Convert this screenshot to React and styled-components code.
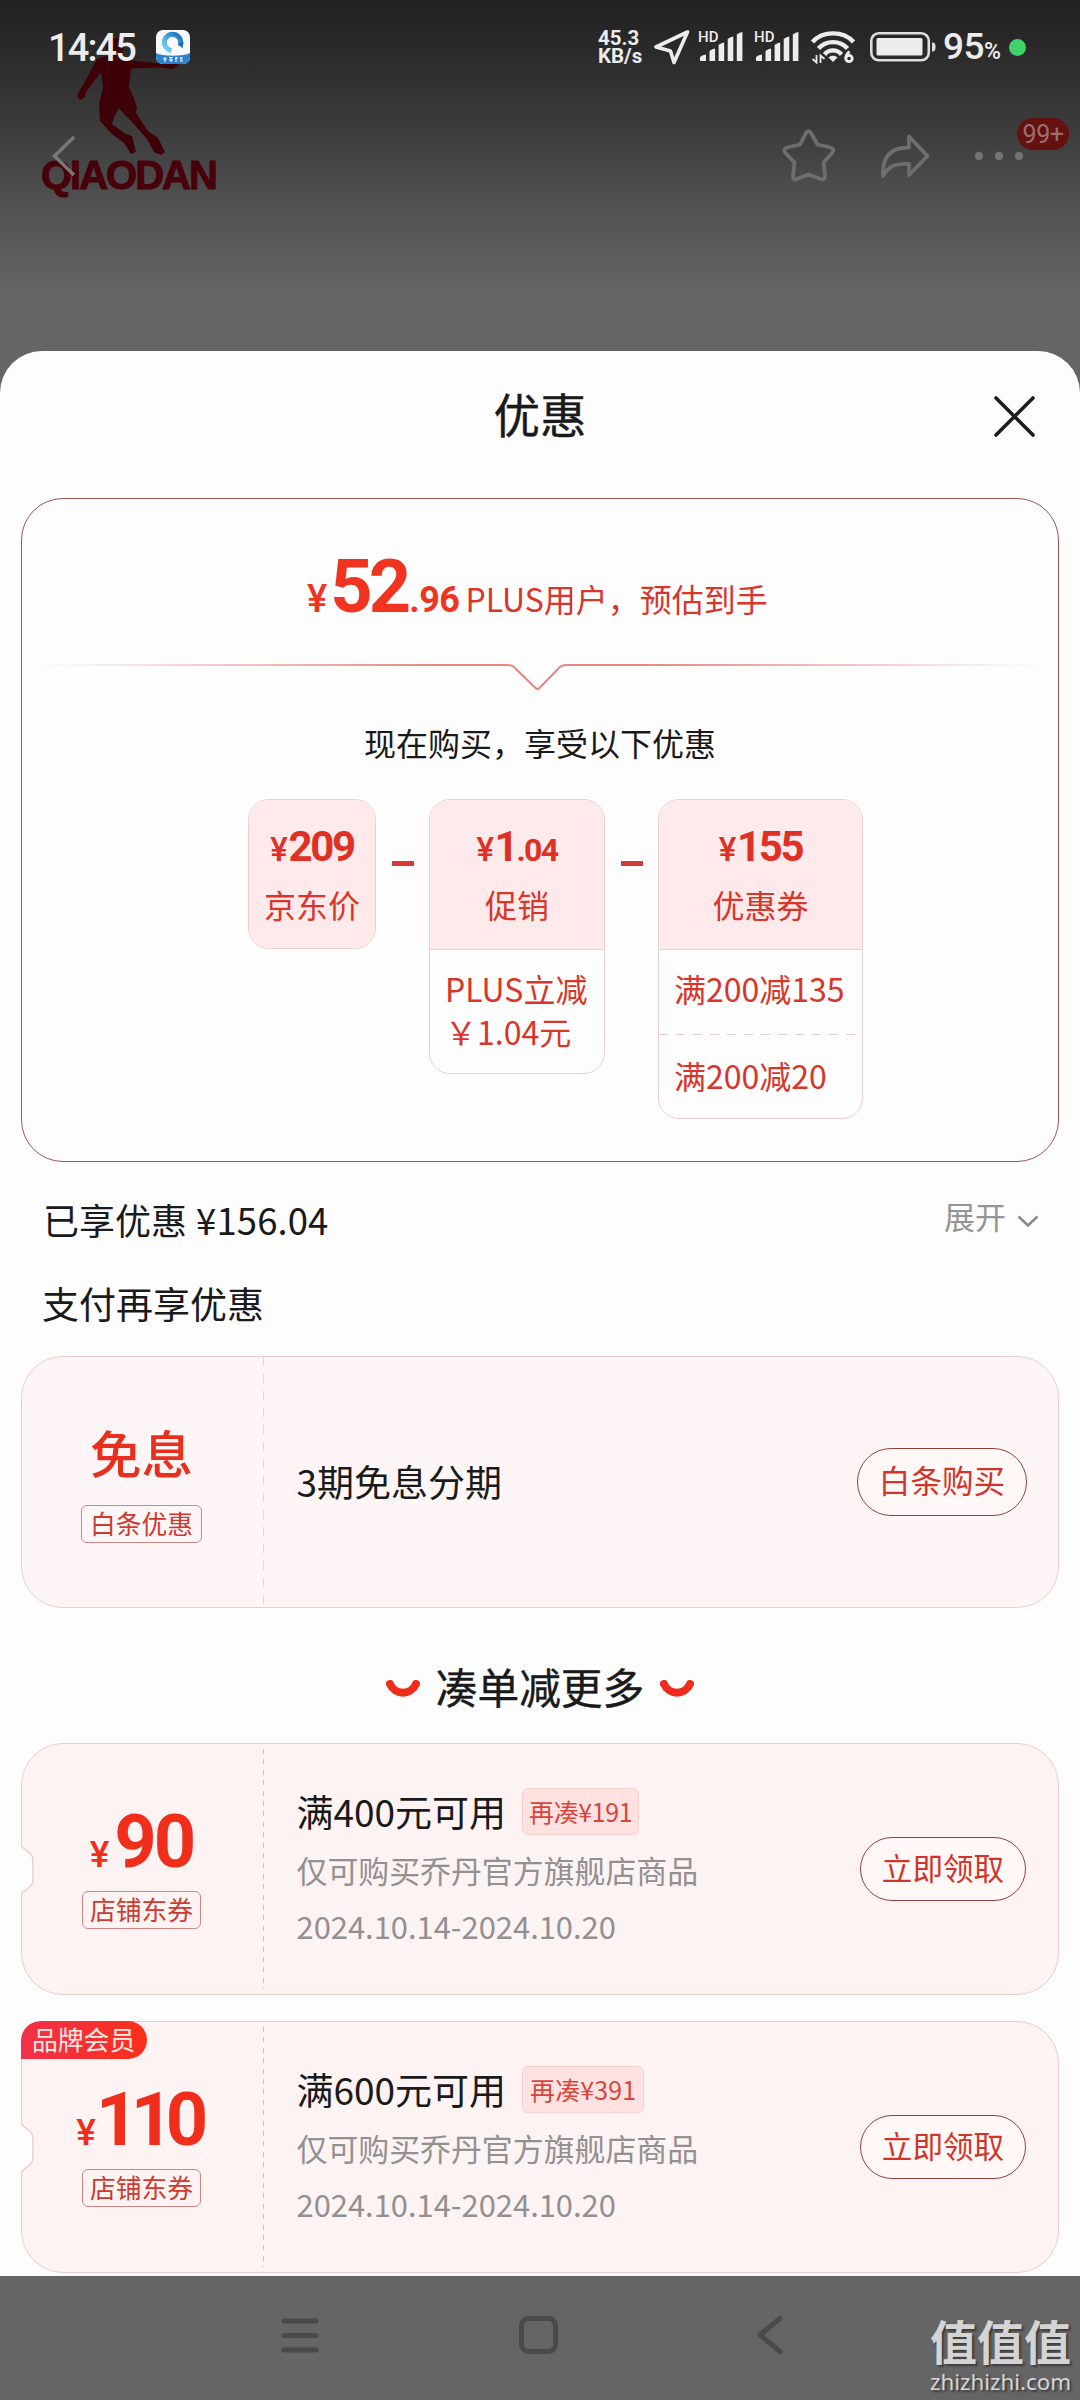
import React from "react";
import styled, { createGlobalStyle } from "styled-components";

const cjk = '"Noto Sans CJK SC", "Noto Sans", sans-serif';
const num = 'Roboto, "Noto Sans CJK SC", sans-serif';
const red = "#d8352b";
const paper = "#fdfdfd";

const Global = createGlobalStyle`
  * { box-sizing: border-box; }
  body { margin: 0; background: #656565; }
`;

const Screen = styled.div`
  width: 1080px;
  height: 2400px;
  display: flex;
  flex-direction: column;
  overflow: hidden;
  background: #656565;
  font-family: ${cjk};
  color: #1a1a1a;
`;

const Header = styled.header`
  position: relative;
  height: 351px;
  flex: none;
  background: linear-gradient(#212121 0, #2c2c2c 60px, #404040 145px, #505050 200px, #656565 295px, #656565 100%);
`;

const Brand = styled.div`
  position: absolute;
  left: 41px;
  top: 36px;
  width: 176px;
  display: flex;
  flex-direction: column;
`;

const BrandName = styled.div`
  margin-top: -9px;
  font: 700 40px/46px "Liberation Sans", sans-serif;
  letter-spacing: -2px;
  color: #48000b;
  -webkit-text-stroke: 1px #48000b;
  white-space: nowrap;
`;

const StatusBar = styled.div`
  position: relative;
  display: flex;
  align-items: center;
  height: 94px;
  padding: 0 54px 0 48px;
  color: #ececec;
`;

const Clock = styled.div`
  width: 108px;
  padding-top: 1px;
  font: 500 38px/44px ${num};
  letter-spacing: -1.9px;
`;

const StatusIcons = styled.div`
  margin-left: auto;
  display: flex;
  align-items: center;
  width: 428px;
`;

const Speed = styled.div`
  width: 56px;
  font: 700 20.5px/18px ${num};
  white-space: pre-line;
`;

const Signal = styled.div`
  position: relative;
  width: 56px;
  height: 34px;
`;

const SignalLabel = styled.span`
  position: absolute;
  left: 0;
  top: 0;
  font: 500 15px/15px ${num};
`;

const Percent = styled.div`
  display: flex;
  align-items: baseline;
  font: 500 37px/44px ${num};
  width: 66px;
  padding-top: 4px;
  letter-spacing: -0.5px;
  small { font-size: 23px; }
`;

const Dot = styled.i`
  flex: none;
  width: 17px;
  height: 17px;
  border-radius: 50%;
  background: #3ed465;
`;

const NavRow = styled.div`
  position: relative;
  display: flex;
  align-items: center;
  height: 124px;
  padding: 0 56px 0 51px;
`;

const NavActions = styled.div`
  position: relative;
  margin-left: auto;
  display: flex;
  align-items: center;
  gap: 44px;
`;

const Badge = styled.span`
  position: absolute;
  right: -45px;
  top: -11px;
  width: 52px;
  height: 32px;
  border-radius: 16px;
  background: #65110f;
  color: #98706f;
  font: 400 25px/34px ${num};
  letter-spacing: -0.5px;
  text-align: center;
`;

const Sheet = styled.main`
  flex: none;
  height: 1925px;
  border-radius: 42px 42px 0 0;
  background: ${paper};
  display: flex;
  flex-direction: column;
  padding: 0 21px;
`;

const SheetHead = styled.div`
  display: grid;
  grid-template-columns: 1fr auto 1fr;
  align-items: center;
  height: 124px;
  margin-bottom: 23px;
  padding-right: 24px;
  padding-left: 24px;
`;

const SheetTitle = styled.h1`
  grid-column: 2;
  margin: 0;
  font: 400 46.5px/60px ${cjk};
  -webkit-text-stroke: 0.4px #1a1a1a;
`;

const Close = styled.span`
  justify-self: end;
  display: flex;
  padding-top: 6px;
`;

const PriceCard = styled.section`
  flex: none;
  height: 664px;
  border: 1px solid #a45552;
  border-radius: 42px;
  display: flex;
  flex-direction: column;
  align-items: center;
  padding-top: 48px;
`;

const PriceRow = styled.div`
  display: flex;
  align-items: baseline;
  height: 80px;
  color: #f0341f;
  margin-right: 5px;
`;

const Yen = styled.span`
  font: ${(p) => p.$weight || 500} ${(p) => p.$size}px/1 ${num};
  margin-right: ${(p) => p.$gap || 0}px;
`;

const Big = styled.span`
  font: 700 74px/80px ${num};
  letter-spacing: ${(p) => p.$track || -3.5}px;
  margin-right: ${(p) => p.$trim || 0}px;
`;

const Cents = styled.span`
  font: 700 36px/1 ${num};
  letter-spacing: -0.5px;
`;

const PriceNote = styled.span`
  margin-left: 6px;
  font: 400 32px/1 ${cjk};
  color: ${red};
`;

const Divider = styled.div`
  display: flex;
  margin-top: 32px;
  height: 32px;
`;

const Lead = styled.div`
  margin-top: 31px;
  font: 400 32px/40px ${cjk};
`;

const Formula = styled.div`
  align-self: flex-start;
  display: flex;
  align-items: flex-start;
  margin: 37px 0 0 226px;
`;

const Term = styled.div`
  width: ${(p) => p.$w}px;
  border: 1px solid #ecd0ce;
  border-radius: 21px;
  overflow: hidden;
  color: ${red};
`;

const TermHead = styled.div`
  display: flex;
  flex-direction: column;
  align-items: center;
  height: ${(p) => (p.$alone ? 148 : 150)}px;
  padding-top: 27px;
  background: #feeaea;
  border-bottom: ${(p) => (p.$alone ? 0 : 1)}px solid #ecd0ce;
`;

const TermAmount = styled.div`
  display: flex;
  align-items: baseline;
  height: 40px;
  font: 700 42px/40px ${num};
  letter-spacing: -2.3px;
  color: #de3024;
  small { font-size: 32px; line-height: 1; letter-spacing: -1.6px; }
`;

const TermLabel = styled.div`
  margin-top: 17px;
  font: 400 32px/40px ${cjk};
`;

const TermItem = styled.div`
  padding: ${(p) => p.$pad};
  font: 400 32px/43px ${cjk};
  white-space: pre-line;
`;

const DashRule = styled.div`
  height: 1px;
  background: repeating-linear-gradient(90deg, #e6cfcd 0 9px, transparent 9px 17px);
`;

const Minus = styled.i`
  width: 22px;
  height: 5px;
  margin: 62px 15.5px 0;
  background: #d63c35;
`;

const Summary = styled.div`
  flex: none;
  height: 114px;
  display: flex;
  align-items: center;
  justify-content: space-between;
  padding: 0 20px 0 22px;
  font: 400 36px/48px ${cjk};
`;

const Saved = styled.span`
  margin-left: 1px;
  font-size: 36.5px;
  letter-spacing: 0.1px;
`;

const Expand = styled.span`
  display: flex;
  align-items: center;
  gap: 11px;
  padding-bottom: 6px;
  font-size: 31px;
  color: #949494;
  svg { margin-top: 10px; }
`;

const PayHeading = styled.h2`
  flex: none;
  margin: 0 0 27px;
  padding: 1px 0 0 21px;
  font: 400 37px/52px ${cjk};
`;

const Ticket = styled.section`
  position: relative;
  flex: none;
  display: grid;
  grid-template-columns: 242px 1fr auto;
  height: 252px;
  margin-bottom: ${(p) => p.$after || 0}px;
  padding-right: ${(p) => p.$end}px;
  border: 1px solid #edcdca;
  border-radius: 42px;
  background: ${(p) => p.$bg || "#fef3f3"};
`;

const Stub = styled.div`
  display: flex;
  flex-direction: column;
  align-items: center;
  padding-top: ${(p) => p.$top}px;
  padding-right: 3px;
  background: ${(p) =>
    p.$fine
      ? "repeating-linear-gradient(180deg, #e3b9b6 0 5px, transparent 5px 10.4px) right 5px / 1.5px 240px no-repeat"
      : "repeating-linear-gradient(180deg, #efd3d2 0 9px, transparent 9px 17px) right 0 / 1.5px 100% no-repeat"};
`;

const StubTitle = styled.div`
  font: 500 51.5px/60px ${cjk};
  color: #e8301f;
`;

const StubAmount = styled.div`
  display: flex;
  align-items: baseline;
  height: 80px;
  color: #f02e1c;
`;

const Tag = styled.div`
  margin-top: ${(p) => p.$top}px;
  height: 38px;
  padding: 0 ${(p) => p.$pad}px;
  border: 1px solid #cf8581;
  border-radius: 6px;
  font: 400 25.8px/34px ${cjk};
  color: #cc3a30;
`;

const TicketText = styled.div`
  display: flex;
  flex-direction: column;
  padding: ${(p) => p.$top}px 0 0 32.5px;
  white-space: nowrap;
`;

const TicketTitle = styled.div`
  display: flex;
  align-items: center;
  gap: 16px;
  height: 48px;
  font: 400 37px/48px ${cjk};
`;

const NeedMore = styled.span`
  height: 47px;
  padding: 0 ${(p) => p.$pad}px;
  border: 1px solid #fad0cd;
  border-radius: 6px;
  background: #fee2e1;
  font-size: 25px;
  letter-spacing: ${(p) => p.$track}px;
  line-height: 44px;
  color: #d8453c;
`;

const Muted = styled.div`
  margin-top: ${(p) => p.$gap}px;
  font: 400 30.9px/37px ${cjk};
  color: #929090;
`;

const Pill = styled.button`
  align-self: center;
  width: ${(p) => p.$w}px;
  height: ${(p) => p.$h}px;
  padding: 0 0 4px;
  border: 1px solid #96403c;
  border-radius: 40px;
  background: #fff8f6;
  font: 400 ${(p) => p.$size}px/1 ${cjk};
  color: #cf352b;
`;

const MoreHeading = styled.h2`
  flex: none;
  display: flex;
  align-items: center;
  justify-content: center;
  gap: 16px;
  height: 135px;
  margin: 0;
  padding-top: 20px;
  font: 400 41.7px/56px ${cjk};
  -webkit-text-stroke: 0.4px #1a1a1a;
  svg { margin-top: 6px; }
`;

const NotchMark = styled.svg`
  position: absolute;
  left: -3px;
  top: 99px;
`;

const Member = styled.div`
  position: absolute;
  left: -1px;
  top: -1px;
  width: 126px;
  height: 38px;
  padding-left: 11px;
  border-radius: 20px 19px 19px 0;
  background: linear-gradient(90deg, #f1314a, #fb2f1a);
  font: 400 25.8px/35px ${cjk};
  color: #ffe9e6;
`;

const SystemNav = styled.footer`
  position: relative;
  flex: 1;
  display: flex;
  justify-content: center;
  align-items: flex-start;
  gap: 199.500px;
  padding-top: 39px;
  padding-right: 16px;
`;

const Watermark = styled.div`
  position: absolute;
  right: 8px;
  top: 38px;
  width: 142px;
  color: #d4d4d4;
  text-shadow: 2px 2px 2px #3d3d3d;
  white-space: nowrap;
`;

const WatermarkName = styled.div`
  font: 700 47px/52px ${cjk};
`;

const WatermarkSite = styled.div`
  margin-top: 4px;
  font: 400 22.3px/24px "Noto Sans", sans-serif;
`;

const Player = () => (
  <svg width="150" height="125" viewBox="41 36 150 125" fill="#3e0007">
    <circle cx="115" cy="47" r="9" />
    <path d="M97 59L106 56H125L132 60.500L158 63.500L174 63L179 65.500L172 69L160 67.500L131 68.500L130 80L128.500 86L133 96L137 107L136 113L148 131L158 138L162 146L165 152L161 155L154 152L147 139L133 123L118.500 108L114 118L112 124L124 133L132 136L134 144L136 152L131 154L124 143L112 134L100 121L99 104L103 88L101 72L95 80L86 92L84.500 98L80 100L77 96L80 90L88 76Z" />
  </svg>
);

const AppIcon = () => (
  <svg width="34" height="34" viewBox="0 0 34 34">
    <defs>
      <linearGradient id="ring" x1="0" y1="1" x2="1" y2="0">
        <stop offset="0" stopColor="#7fd8f6" />
        <stop offset="1" stopColor="#1a6cb8" />
      </linearGradient>
      <clipPath id="tile"><rect width="34" height="34" rx="7" /></clipPath>
    </defs>
    <g clipPath="url(#tile)">
      <rect width="34" height="34" fill="#f7fbff" />
      <circle cx="16.500" cy="12.500" r="8.200" fill="none" stroke="url(#ring)" strokeWidth="5" />
      <path d="M16 17C16 12 22 12 22.500 16C26.500 15 28 17 28 19.500L26 23H15Z" fill="#f7fbff" />
      <path d="M22 14L26.500 18.500L27.500 12Z" fill="#1a6cb8" />
      <path d="M0 23C5 26.500 29 26.500 34 23V34H0Z" fill="#2c82cc" />
      <path d="M7 29h4M9 27v5M13 27.500h4M13 30h4M15 27v5M19 28h3M20 27v5M24 28h3M24 31h3M25 27v4" stroke="#eaf5ff" strokeWidth="1.200" />
    </g>
  </svg>
);

const Bars = () => (
  <svg width="46" height="34" viewBox="0 0 46 34" fill="#ececec">
    <path d="M2 27q3-2.500 6-2.500v6.500H2zM11.500 21q3-2.500 5.600-2.500V31h-5.600zM20.600 15q3-2.500 5.600-2.500V31h-5.600zM29.700 9q3-2.500 5.600-2.500V31h-5.600zM38.800 4.500q3-2.500 5.600-2.500V31h-5.600z" />
  </svg>
);

const SignalGroup = () => (
  <Signal>
    <SignalLabel>HD</SignalLabel>
    <Bars />
  </Signal>
);

const Wifi = () => (
  <svg width="60" height="34" viewBox="0 0 60 34" fill="none" stroke="#ececec" strokeWidth="4.400">
    <path d="M2.500 12C12.500 0.500 33.500 0.500 43.500 12M8.500 18.500C16 10 30 10 37.500 18.500M14.500 24.500C19 19 27 19 31.500 24.500" />
    <path d="M23 32l-4.500-4.500c2.500-2.500 6.500-2.500 9 0z" fill="#ececec" stroke="none" />
    <path d="M6.500 25v7.500l-4-3.500M10.500 33v-7.500l4 3.500" strokeWidth="1.800" />
    <path d="M39.500 21.500c-3 2.500-3.800 4.500-3.800 7" strokeWidth="2.800" />
    <circle cx="39" cy="28.500" r="3.200" strokeWidth="2.800" />
  </svg>
);

const Battery = () => (
  <svg width="73" height="30" viewBox="0 0 73 30">
    <rect x="1.300" y="1.300" width="57.500" height="27" rx="7.500" fill="none" stroke="#dedede" strokeWidth="2.600" />
    <rect x="6.500" y="6" width="46" height="17.500" rx="1.500" fill="#ececec" />
    <path d="M62 10.500c3 0 3.500 1.500 3.500 4.500s-.5 4.500-3.500 4.500z" fill="#dedede" />
  </svg>
);

const Smile = () => (
  <svg width="34" height="18" viewBox="0 0 34 18">
    <path d="M4 4C9 15.500 25 15.500 30 4" fill="none" stroke="#ef2d1c" strokeWidth="8" strokeLinecap="round" />
  </svg>
);

const Notch = () => (
  <NotchMark width="18" height="54" viewBox="0 0 18 54">
    <path d="M0 2H2.200C3 5.500 6 6 9.500 9C12.500 12 13.800 13 13.800 17V37C13.800 41 12.500 42 9.500 45C6 48 3 48.500 2.200 52H0Z" fill={paper} />
    <path d="M2.200 2C3 5.500 6 6 9.500 9C12.500 12 13.800 13 13.800 17V37C13.800 41 12.500 42 9.500 45C6 48 3 48.500 2.200 52" fill="none" stroke="#edcdca" strokeWidth="1.300" />
  </NotchMark>
);

const terms = [
  { w: 128, whole: "209", label: "京东价", items: [] },
  { w: 176, whole: "1", cents: ".04", label: "促销", items: ["PLUS立减\n￥1.04元"] },
  { w: 205, whole: "155", label: "优惠券", items: ["满200减135", "满200减20"] },
];

const coupons = [
  { amount: "90", title: "满400元可用", more: "再凑¥191", track: -3, trim: 0, yenGap: 5, moreTrack: -0.4, morePad: 6 },
  { amount: "110", title: "满600元可用", more: "再凑¥391", member: true, track: -7.5, trim: 6, yenGap: 0, moreTrack: 0.1, morePad: 7 },
];

const itemPad = (i, count) => {
  if (i > 0) return "19px 0 21px 15px";
  return count > 1 ? "17px 0 24px 15px" : "17px 0 20px 15px";
};

export default function App() {
  return (
    <Screen>
      <Global />
      <Header>
        <Brand>
          <Player />
          <BrandName>QIAODAN</BrandName>
        </Brand>
        <StatusBar>
          <Clock>14:45</Clock>
          <AppIcon />
          <StatusIcons>
            <Speed>{"45.3\nKB/s"}</Speed>
            <svg width="44" height="36" viewBox="0 0 44 36" fill="none" stroke="#ececec" strokeWidth="3.600" strokeLinejoin="round">
              <path d="M33.500 3L2 18l14.500 4L20 33.500z" />
            </svg>
            <SignalGroup />
            <SignalGroup />
            <Wifi />
            <Battery />
            <Percent>95<small>%</small></Percent>
            <Dot />
          </StatusIcons>
        </StatusBar>
        <NavRow>
          <svg width="26" height="44" viewBox="0 0 26 44" fill="none" stroke="#777" strokeWidth="3.500">
            <path d="M23 3L3.500 22 23 41" />
          </svg>
          <NavActions>
            <svg width="54" height="54" viewBox="0 0 54 54" fill="none" stroke="#6e6e6e" strokeWidth="3.800" strokeLinejoin="round">
              <path d="M24 4Q26.500 0.500 29 4L35.500 15.500L48.500 18.500Q53 20 50 24L41.500 33.500L43 46.500Q43 52 38.500 50L26.500 45.500L15 50Q11 52 11 46.500L12.500 33.500L3.500 24Q0.500 20 5 18.500L18 15.500Z" />
            </svg>
            <svg width="50" height="46" viewBox="0 0 50 46" fill="none" stroke="#6e6e6e" strokeWidth="3.800" strokeLinejoin="round">
              <path d="M29 3.500L47.500 23 29 42V31C14 30 8 34 3 43C2 26 9 14 29 14.500Z" />
            </svg>
            <svg width="50" height="10" viewBox="0 0 50 10" fill="#737373">
              <circle cx="5" cy="5" r="4.200" /><circle cx="25" cy="5" r="4.200" /><circle cx="45" cy="5" r="4.200" />
            </svg>
            <Badge>99+</Badge>
          </NavActions>
        </NavRow>
      </Header>

      <Sheet>
        <SheetHead>
          <SheetTitle>优惠</SheetTitle>
          <Close>
            <svg width="41" height="41" viewBox="0 0 41 41" stroke="#1c1c1c" strokeWidth="3.600" strokeLinecap="round">
              <path d="M2 2L39 39M39 2L2 39" />
            </svg>
          </Close>
        </SheetHead>

        <PriceCard>
          <PriceRow>
            <Yen $size={38} $gap={3}>¥</Yen>
            <Big $track={-4} $trim={2}>52</Big>
            <Cents>.96</Cents>
            <PriceNote>PLUS用户，预估到手</PriceNote>
          </PriceRow>
          <Divider>
            <svg width="1000" height="32" viewBox="-10 0 1000 32" fill="none">
              <defs>
                <linearGradient id="fade" gradientUnits="userSpaceOnUse" x1="-10" y1="0" x2="990" y2="0">
                  <stop offset="0" stopColor="#e98a86" stopOpacity="0" />
                  <stop offset=".4" stopColor="#e58783" />
                  <stop offset=".6" stopColor="#e58783" />
                  <stop offset="1" stopColor="#e98a86" stopOpacity="0" />
                </linearGradient>
              </defs>
              <path d="M-10 6H457Q463 6 466 10L485 28.500Q487.500 31.500 490 28.500L508 10Q511 6 517 6H990" stroke="url(#fade)" strokeWidth="2" />
            </svg>
          </Divider>
          <Lead>现在购买，享受以下优惠</Lead>
          <Formula>
            {terms.map((t, i) => (
              <React.Fragment key={t.label}>
                {i > 0 && <Minus />}
                <Term $w={t.w}>
                  <TermHead $alone={!t.items.length}>
                    <TermAmount>
                      <Yen $size={33} $gap={3}>¥</Yen>
                      {t.whole}
                      {t.cents && <small>{t.cents}</small>}
                    </TermAmount>
                    <TermLabel>{t.label}</TermLabel>
                  </TermHead>
                  {t.items.map((text, j) => (
                    <React.Fragment key={text}>
                      {j > 0 && <DashRule />}
                      <TermItem $pad={itemPad(j, t.items.length)}>{text}</TermItem>
                    </React.Fragment>
                  ))}
                </Term>
              </React.Fragment>
            ))}
          </Formula>
        </PriceCard>

        <Summary>
          <span>已享优惠 <Saved>¥156.04</Saved></span>
          <Expand>
            展开
            <svg width="22" height="13" viewBox="0 0 22 13" fill="none" stroke="#8c8c8c" strokeWidth="2.600">
              <path d="M1.500 1.500L11 10.500 20.500 1.500" />
            </svg>
          </Expand>
        </Summary>

        <PayHeading>支付再享优惠</PayHeading>

        <Ticket $bg="#fef6f6" $end={31}>
          <Stub $top={65}>
            <StubTitle>免息</StubTitle>
            <Tag $top={23} $pad={7.5}>白条优惠</Tag>
          </Stub>
          <TicketText $top={100}>
            <TicketTitle>3期免息分期</TicketTitle>
          </TicketText>
          <Pill $w={170} $h={68} $size={31.6}>白条购买</Pill>
        </Ticket>

        <MoreHeading>
          <Smile />
          凑单减更多
          <Smile />
        </MoreHeading>

        {coupons.map((c, i) => (
          <Ticket key={c.amount} $after={i === 0 ? 26 : 0} $end={32}>
            <Notch />
            {c.member && <Member>品牌会员</Member>}
            <Stub $fine $top={58}>
              <StubAmount>
                <Yen $size={37} $gap={c.yenGap}>¥</Yen>
                <Big $track={c.track} $trim={c.trim}>{c.amount}</Big>
              </StubAmount>
              <Tag $top={9} $pad={6.5}>店铺东券</Tag>
            </Stub>
            <TicketText $top={43}>
              <TicketTitle>
                {c.title}
                <NeedMore $track={c.moreTrack} $pad={c.morePad}>{c.more}</NeedMore>
              </TicketTitle>
              <Muted $gap={16}>仅可购买乔丹官方旗舰店商品</Muted>
              <Muted $gap={19}>2024.10.14-2024.10.20</Muted>
            </TicketText>
            <Pill $w={166} $h={64} $size={30.6}>立即领取</Pill>
          </Ticket>
        ))}
      </Sheet>

      <SystemNav>
        <svg width="38" height="40" viewBox="0 0 38 40" stroke="#4a4a4a" strokeWidth="5" strokeLinecap="round">
          <path d="M3 6H35M3 20.500H35M3 35H35" />
        </svg>
        <svg width="39" height="40" viewBox="0 0 39 40" fill="none" stroke="#4a4a4a" strokeWidth="5">
          <rect x="2.500" y="3.500" width="34" height="33" rx="7" />
        </svg>
        <svg width="26" height="40" viewBox="0 0 26 40" fill="none" stroke="#4a4a4a" strokeWidth="5" strokeLinecap="round" strokeLinejoin="round">
          <path d="M23 3.500L3 20 23 36.500" />
        </svg>
        <Watermark>
          <WatermarkName>值值值</WatermarkName>
          <WatermarkSite>zhizhizhi.com</WatermarkSite>
        </Watermark>
      </SystemNav>
    </Screen>
  );
}
